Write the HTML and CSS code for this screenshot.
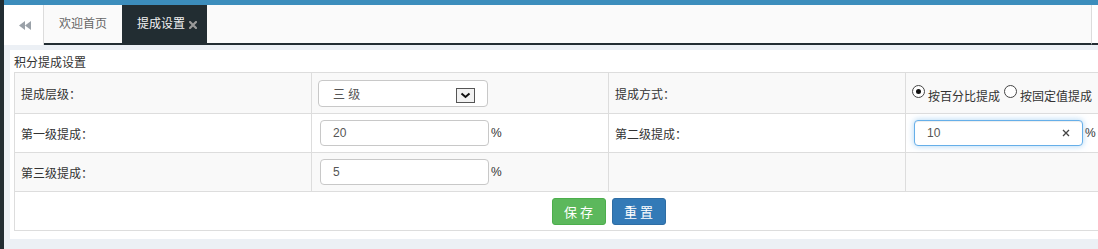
FILE: index.html
```html
<!DOCTYPE html>
<html lang="zh-CN">
<head>
<meta charset="utf-8">
<title>提成设置</title>
<link rel="stylesheet" href="styles.css">
</head>
<body>
<div class="app">
  <aside class="side"></aside>
  <div class="main">
    <div class="topbar"></div>
    <div class="tabbar">
      <div class="tab-back">
        <svg class="back-icon" width="12" height="9" viewBox="0 0 12 9"><polygon points="0,4.5 6,0 6,9" fill="#9aa1a8"/><polygon points="6,4.5 12,0 12,9" fill="#9aa1a8"/></svg>
      </div>
      <div class="tabs">
        <div class="tab">欢迎首页</div>
        <div class="tab active">提成设置<svg class="tab-close" width="8" height="8" viewBox="0 0 8 8"><path d="M1 1L7 7M7 1L1 7" stroke="#9a9a9a" stroke-width="2.2" stroke-linecap="square"/></svg></div>
      </div>
      <div class="tab-end"></div>
    </div>
    <div class="content">
      <div class="panel">
        <div class="panel-title">积分提成设置</div>
        <div class="grid">
          <div class="cell odd label">提成层级<span class="colon">：</span></div>
          <div class="cell odd">
            <div class="select">三 级<span class="select-arrow"><svg width="11" height="7" viewBox="0 0 11 7"><path d="M1.5 1.5L5.5 5L9.5 1.5" fill="none" stroke="#111" stroke-width="2"/></svg></span></div>
          </div>
          <div class="cell odd label">提成方式<span class="colon">：</span></div>
          <div class="cell odd">
            <div class="radios">
              <span class="radio checked"></span><span class="radio-text">按百分比提成</span>
              <span class="radio second"></span><span class="radio-text">按固定值提成</span>
            </div>
          </div>

          <div class="cell label">第一级提成<span class="colon">：</span></div>
          <div class="cell"><div class="input">20</div><span class="pct">%</span></div>
          <div class="cell label">第二级提成<span class="colon">：</span></div>
          <div class="cell"><div class="input focus">10<svg class="clear" width="8" height="8" viewBox="0 0 8 8"><path d="M1 1L7 7M7 1L1 7" stroke="#444" stroke-width="1.3"/></svg></div><span class="pct">%</span></div>

          <div class="cell odd label">第三级提成<span class="colon">：</span></div>
          <div class="cell odd"><div class="input">5</div><span class="pct">%</span></div>
          <div class="cell odd"></div>
          <div class="cell odd"></div>

          <div class="cell actions">
            <button class="btn btn-save">保存</button>
            <button class="btn btn-reset">重置</button>
          </div>
        </div>
      </div>
    </div>
  </div>
</div>
</body>
</html>
```

FILE: styles.css
```css
html, body {
  margin: 0;
  padding: 0;
  overflow: hidden;
}
body {
  font-family: "Liberation Sans", "Noto Sans CJK SC", sans-serif;
  font-size: 12px;
  color: #333;
  background: #ecf0f5;
  text-spacing-trim: space-all;
}
.app {
  display: flex;
  height: 249px;
  width: 1098px;
  overflow: hidden;
}
.side {
  width: 4px;
  flex: none;
  background: #222d32;
}
.main {
  flex: 1;
  min-width: 0;
  display: flex;
  flex-direction: column;
}
.topbar {
  height: 5px;
  background: #3c8dbc;
}
.tabbar {
  display: flex;
  height: 40px;
  background: #fafafa;
}
.tab-back {
  width: 40px;
  box-sizing: border-box;
  height: 40px;
  background: #fff;
  border-right: 1px solid #dcdcdc;
  display: flex;
  align-items: center;
  justify-content: center;
}
.back-icon {
  margin-left: 2px;
}
.tabs {
  flex: 1;
  display: flex;
  height: 40px;
  box-sizing: border-box;
  border-bottom: 2px solid #222d32;
}
.tab {
  height: 38px;
  line-height: 38px;
  padding: 0 15px;
  color: #666;
  font-size: 12px;
  display: flex;
  align-items: center;
}
.tab.active {
  background: #222d32;
  color: #f2f2f2;
  padding-right: 10px;
}
.tab-close {
  margin-left: 4px;
  margin-top: 1px;
}
.tab-end {
  width: 7px;
  box-sizing: border-box;
  height: 40px;
  background: #fff;
  border-left: 1px solid #dcdcdc;
  border-bottom: 2px solid #222d32;
}
.content {
  flex: 1;
  padding: 5px 0 0 6px;
  background: #ecf0f5;
}
.panel {
  background: #fff;
  padding: 5px 0 8px 4px;
}
.panel-title {
  height: 17px;
  line-height: 17px;
  font-size: 12px;
  color: #333;
}
.grid {
  display: grid;
  grid-template-columns: repeat(4, 296px);
  grid-template-rows: 40px 38px 38px 38px;
  gap: 1px;
  padding: 1px;
  background: #dddddd;
  width: max-content;
}
.cell {
  background: #fff;
  display: flex;
  align-items: center;
  padding: 0 6px;
}
.cell.odd {
  background: #f9f9f9;
}
.cell.label {
  color: #333;
}
.colon {
  display: inline-block;
  width: 12px;
  text-align: center;
}
.select {
  width: 170px;
  height: 27px;
  box-sizing: border-box;
  border: 1px solid #c8c8c8;
  border-radius: 4px;
  background: #fff;
  display: flex;
  align-items: center;
  padding-left: 14px;
  color: #555;
  position: relative;
}
.select-arrow {
  position: absolute;
  right: 12px;
  top: 7px;
  width: 19px;
  height: 15px;
  box-sizing: border-box;
  border: 1px solid #555;
  background: #f2f2f2;
  display: flex;
  align-items: center;
  justify-content: center;
}
.input {
  margin-left: 2px;
  width: 169px;
  height: 26px;
  box-sizing: border-box;
  border: 1px solid #c8c8c8;
  border-radius: 4px;
  background: #fff;
  display: flex;
  align-items: center;
  padding-left: 12px;
  color: #555;
  position: relative;
}
.input.focus {
  border-color: #66afe9;
  box-shadow: inset 0 1px 1px rgba(0,0,0,.075), 0 0 6px rgba(102,175,233,.55);
}
.clear {
  position: absolute;
  right: 12px;
  top: 8px;
}
.pct {
  margin-left: 2px;
  color: #333;
}
.radios {
  display: flex;
  align-items: center;
}
.radio {
  width: 13px;
  height: 13px;
  box-sizing: border-box;
  border: 1px solid #444;
  border-radius: 50%;
  background: #fff;
  margin-bottom: 3px;
  position: relative;
}
.radio.checked::after {
  content: "";
  position: absolute;
  left: 3px;
  top: 3px;
  width: 5px;
  height: 5px;
  border-radius: 50%;
  background: #111;
}
.radio.second {
  margin-left: 4px;
}
.radio-text {
  margin-left: 3px;
  margin-top: 5px;
  color: #333;
}
.cell.actions {
  grid-column: 1 / span 4;
  justify-content: center;
  gap: 6px;
}
.btn {
  width: 54px;
  height: 27px;
  box-sizing: border-box;
  border-radius: 3px;
  color: #fff;
  font-family: "Liberation Sans", "Noto Sans CJK SC", sans-serif;
  font-size: 13px;
  letter-spacing: 3px;
  padding: 0 0 0 3px;
  cursor: pointer;
}
.btn-save {
  background: #5cb85c;
  border: 1px solid #4cae4c;
}
.btn-reset {
  background: #337ab7;
  border: 1px solid #2e6da4;
}
```
